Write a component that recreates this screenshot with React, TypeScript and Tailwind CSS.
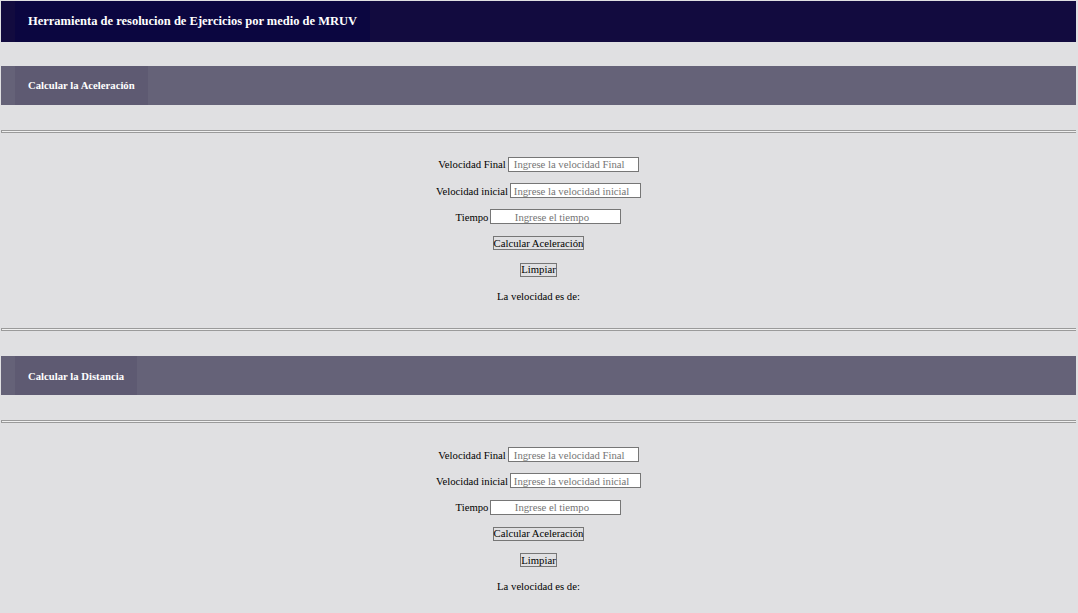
const serif = "font-['Liberation_Serif','Times_New_Roman',serif]";

function SectionBar({ title }: { title: string }) {
  return (
    <div className="flex h-[39px] bg-[#656278] px-[14px]">
      <div className="flex h-full items-center bg-[#5e5a72] px-[13px]">
        <h2 className="text-[10.7px] font-bold text-white">{title}</h2>
      </div>
    </div>
  );
}

function Rule() {
  return <div className="h-[3px] border-t border-b border-l border-t-[#9a9a9a] border-b-[#9a9a9a] border-l-[#9a9a9a] bg-[#f0f0f0]" />;
}

function Field({ label, placeholder }: { label: string; placeholder: string }) {
  return (
    <div className="flex h-[26.4px] items-center justify-center gap-[2px]">
      <label className="text-[10.7px] text-black">{label}</label>
      <input
        type="text"
        placeholder={placeholder}
        className="h-[15px] w-[131px] border border-[#767676] bg-white pr-2 text-center text-[10.7px] text-black outline-none placeholder:text-[#757575]"
      />
    </div>
  );
}

function Calculator() {
  return (
    <div className="pt-[18px] pb-[19px]">
      <Field label="Velocidad Final" placeholder="Ingrese la velocidad Final" />
      <Field label="Velocidad inicial" placeholder="Ingrese la velocidad inicial" />
      <Field label="Tiempo" placeholder="Ingrese el tiempo" />
      <div className="flex h-[26.4px] items-center justify-center">
        <button className="h-[14px] border border-[#767676] bg-[#e0e0e2] px-0 text-[10.7px] leading-none text-black">
          Calcular Aceleración
        </button>
      </div>
      <div className="flex h-[26.4px] items-center justify-center">
        <button className="h-[14px] border border-[#767676] bg-[#e0e0e2] px-0 text-[10.7px] leading-none text-black">
          Limpiar
        </button>
      </div>
      <div className="flex h-[26.4px] items-center justify-center">
        <p className="text-[10.7px] text-black">La velocidad es de:</p>
      </div>
    </div>
  );
}

export default function App() {
  return (
    <div className={`${serif} min-h-screen bg-[#e0e0e2] pt-[1px] pl-[1px] pr-[2px]`}>
      <header className="flex h-[41px] bg-[#120b3f] px-[14px]">
        <div className="flex h-full items-center bg-[#0b0640] px-[13px]">
          <h1 className="text-[12.5px] font-bold text-white">
            Herramienta de resolucion de Ejercicios por medio de MRUV
          </h1>
        </div>
      </header>

      <div className="mt-[24px]">
        <SectionBar title="Calcular la Aceleración" />
      </div>
      <div className="mt-[25px]">
        <Rule />
      </div>
      <Calculator />
      <Rule />

      <div className="mt-[25px]">
        <SectionBar title="Calcular la Distancia" />
      </div>
      <div className="mt-[25px]">
        <Rule />
      </div>
      <Calculator />
    </div>
  );
}
